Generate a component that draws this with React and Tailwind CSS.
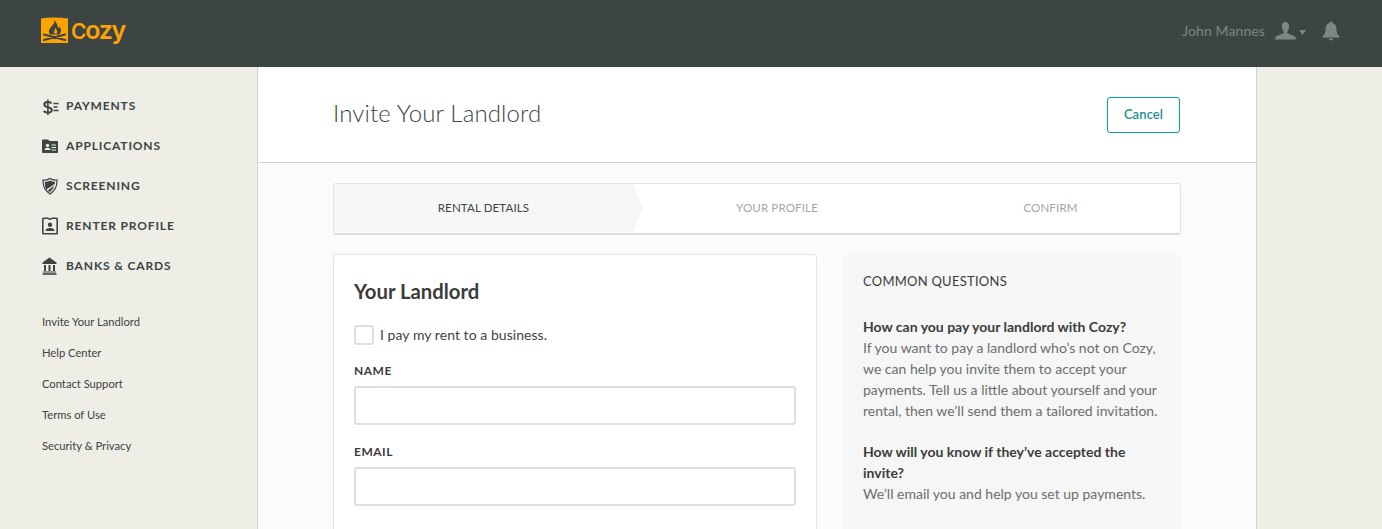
const FONT = "font-['Lato','Open_Sans',sans-serif]";

function CozyLogo() {
  return (
    <div className="flex items-center gap-[3px]">
      <svg width="27" height="27" viewBox="0 0 27 27">
        <path d="M0 1.5 Q13 -0.5 27 1.5 V26 H0 Z" fill="#ffa300" />
        <path d="M13 3 C14.5 6 11 8.5 9 11.5 C7.5 13.5 7.5 15.5 9 17.5 L18.5 17.5 C20.5 15 20.5 12.5 18.5 9.5 L17 11.5 C17 8.5 15.5 5 13 3 Z" fill="#3c4543" />
        <path d="M13.5 10.5 C15 12.5 12.5 14 13 16.5 L16 16.5 C16.8 14.5 15.5 12 13.5 10.5 Z" fill="#ffa300" />
        <path d="M3 17.5 L24 23 M24 17.5 L3 23" stroke="#3c4543" strokeWidth="2.2" strokeLinecap="round" />
      </svg>
      <span className="font-['Inter',sans-serif] text-[25px] leading-none font-semibold tracking-[-1.3px] text-[#ffa300]">
        <span className="text-[21px]">C</span>ozy
      </span>
    </div>
  );
}

function PaymentsIcon() {
  return (
    <svg width="18" height="18" viewBox="0 0 18 18" fill="none" stroke="#3c4543">
      <path d="M9.5 6.5 C8.5 4.5 2.3 4 2.3 7.5 C2.3 11 9.8 9.5 9.8 13 C9.8 16.5 3 16 1.6 14" strokeWidth="2" />
      <path d="M5.9 2.5V18" strokeWidth="1.6" />
      <path d="M11.5 6.5H16.5 M11.5 10H15.5 M11.5 13.5H16.5" strokeWidth="1.5" />
    </svg>
  );
}

function ApplicationsIcon() {
  return (
    <svg width="18" height="18" viewBox="0 0 18 18">
      <path d="M0 3.5 Q0 2.5 1 2.5 H6 L7.5 4 H15 Q16 4 16 5 V15 Q16 16 15 16 H1 Q0 16 0 15 Z" fill="#3c4543" />
      <circle cx="5.5" cy="8.5" r="1.7" fill="#eeede6" />
      <path d="M2.5 13 Q2.5 10.8 5.5 10.8 Q8.5 10.8 8.5 13 Z" fill="#eeede6" />
      <path d="M9.5 8H14 M9.5 10.5H14 M9.5 13H14" stroke="#eeede6" strokeWidth="1" />
    </svg>
  );
}

function ScreeningIcon() {
  return (
    <svg width="18" height="18" viewBox="0 0 18 18">
      <path d="M8 1.5 Q11 3.5 15 3 Q15.5 12 8 17 Q0.5 12 1 3 Q5 3.5 8 1.5 Z" fill="none" stroke="#3c4543" strokeWidth="1.2" />
      <path d="M8 3.5 Q10.5 5 13 4.8 Q13 6 12.7 7 L4.2 12.8 Q2.6 9.5 2.8 4.8 Q5.5 5 8 3.5 Z" fill="#3c4543" />
      <path d="M12.2 8.6 Q11 12.5 8 15 Q6.5 14 5.3 13.9 Z" fill="#3c4543" />
    </svg>
  );
}

function ProfileIcon() {
  return (
    <svg width="18" height="18" viewBox="0 0 18 18">
      <path d="M1.5 1.2 H5.5 Q8 3 10.5 1.2 H14.5 Q15.2 1.2 15.2 2 V16 Q15.2 16.8 14.5 16.8 H1.5 Q0.8 16.8 0.8 16 V2 Q0.8 1.2 1.5 1.2 Z" fill="none" stroke="#3c4543" strokeWidth="1.6" />
      <circle cx="8" cy="7.8" r="2.2" fill="#3c4543" />
      <path d="M3.5 14 Q3.5 11 8 11 Q12.5 11 12.5 14 Z" fill="#3c4543" />
    </svg>
  );
}

function BankIcon() {
  return (
    <svg width="18" height="18" viewBox="0 0 18 18">
      <path d="M7.5 0.5 L14.5 5.5 V7 H0.5 V5.5 Z" fill="#3c4543" />
      <path d="M3 8V14 M7.5 8V14 M12 8V14" stroke="#3c4543" strokeWidth="2" />
      <path d="M1 15H14" stroke="#3c4543" strokeWidth="1" />
      <path d="M0.5 17H14.5" stroke="#3c4543" strokeWidth="1.6" />
    </svg>
  );
}

const NAV = [
  { label: "PAYMENTS", icon: PaymentsIcon },
  { label: "APPLICATIONS", icon: ApplicationsIcon },
  { label: "SCREENING", icon: ScreeningIcon },
  { label: "RENTER PROFILE", icon: ProfileIcon },
  { label: "BANKS & CARDS", icon: BankIcon },
];

const LINKS = ["Invite Your Landlord", "Help Center", "Contact Support", "Terms of Use", "Security & Privacy"];

function Sidebar() {
  return (
    <aside className="w-[258px] shrink-0 border-r border-[#d5d5d0] pl-[42px] pt-[19px]">
      <nav className="flex flex-col">
        {NAV.map(({ label, icon: Icon }) => (
          <a key={label} className="flex h-[40px] items-center gap-[6px]">
            <Icon />
            <span className="text-[12px] font-bold tracking-[0.85px] text-[#3c4543]">{label}</span>
          </a>
        ))}
      </nav>
      <ul className="mt-[21px] flex flex-col">
        {LINKS.map((l) => (
          <li key={l} className="flex h-[31px] items-center text-[11.2px] text-[#3c4543]">{l}</li>
        ))}
      </ul>
    </aside>
  );
}

function Steps() {
  return (
    <div className="relative flex h-[52px] overflow-hidden rounded-[3px] border border-[#e4e4e4] border-b-2 border-b-[#dcdcdc] bg-white pb-[1px] text-[11.5px] tracking-[0.15px]">
      <div className="relative flex w-[299px] items-center justify-center bg-[#f6f6f6] text-[#3c4543]">
        RENTAL DETAILS
        <div className="absolute -right-[10px] top-0 h-full w-[10px] bg-[#f6f6f6] [clip-path:polygon(0_0,100%_50%,0_100%)]" />
      </div>
      <div className="flex w-[288px] items-center justify-center text-[#a5a5a5]">YOUR PROFILE</div>
      <div className="flex flex-1 items-center justify-center text-[#a5a5a5]">CONFIRM</div>
    </div>
  );
}

function Field({ label }) {
  return (
    <div>
      <label className="block text-[12px] font-bold tracking-[0.5px] text-[#3c3c3c] leading-[15px]">{label}</label>
      <input className="mt-[8px] block h-[39px] w-full rounded-[3px] border-2 border-[#dedede] bg-white" />
    </div>
  );
}

function FormCard() {
  return (
    <section className="w-[484px] shrink-0 rounded-t-[3px] border border-[#e4e4e4] bg-white px-[20px] pt-[24px] pb-[40px]">
      <h2 className="text-[20.3px] font-bold leading-[24px] text-[#3c3c3c]">Your Landlord</h2>
      <div className="mt-[21px] flex items-center gap-[6px]">
        <span className="h-[20px] w-[20px] rounded-[3px] border-2 border-[#dedede] bg-white" />
        <span className="text-[14px] tracking-[0.05px] text-[#3c4543]">I pay my rent to a business.</span>
      </div>
      <div className="mt-[18px] flex flex-col gap-[19px]">
        <Field label="NAME" />
        <Field label="EMAIL" />
      </div>
    </section>
  );
}

function Questions() {
  return (
    <section className="flex-1 rounded-t-[3px] bg-[#f6f6f6] px-[20px] pt-[18px] pb-[30px] text-[14px] leading-[21px] text-[#6a6f6d]">
      <h3 className="text-[13px] tracking-[0.25px] leading-[18px] text-[#3c3c3c]">COMMON QUESTIONS</h3>
      <p className="mt-[26px] font-bold text-[#3c3c3c]">How can you pay your landlord with Cozy?</p>
      <p>If you want to pay a landlord who’s not on Cozy, we can help you invite them to accept your payments. Tell us a little about yourself and your rental, then we’ll send them a tailored invitation.</p>
      <p className="mt-[20px] font-bold text-[#3c3c3c]">How will you know if they’ve accepted the invite?</p>
      <p>We’ll email you and help you set up payments.</p>
    </section>
  );
}

export default function App() {
  return (
    <div className={`flex h-[529px] flex-col overflow-hidden bg-[#eeede6] ${FONT}`}>
      <header className="flex h-[67px] shrink-0 items-center justify-between bg-[#3c4543] pb-[6px] pl-[41px] pr-[42px]">
        <CozyLogo />
        <div className="flex items-center text-[#7c8784]">
          <span className="text-[14px] tracking-[0.1px]">John Mannes</span>
          <svg className="ml-[10px]" width="22" height="20" viewBox="0 0 22 20" fill="currentColor">
            <path d="M10.5 1 C13.5 1 14.5 3.5 14 6.5 C13.7 8.5 12.8 10 12 11 C12 12.5 14 13 17 14 C20 15 21 16 21 18.5 H0 C0 16 1 15 4 14 C7 13 9 12.5 9 11 C8.2 10 7.3 8.5 7 6.5 C6.5 3.5 7.5 1 10.5 1 Z" />
          </svg>
          <svg className="ml-[2px] mt-[3px]" width="7" height="5" viewBox="0 0 7 5" fill="currentColor">
            <path d="M0 0H7L3.5 5Z" />
          </svg>
          <svg className="ml-[16px]" width="18" height="20" viewBox="0 0 18 20" fill="currentColor">
            <path d="M9 0.5 C10 0.5 10.5 1.2 10.5 2 C13.5 3 14.5 5.5 14.5 8.5 C14.5 12 15.5 13.5 17.5 15.5 V16.5 H0.5 V15.5 C2.5 13.5 3.5 12 3.5 8.5 C3.5 5.5 4.5 3 7.5 2 C7.5 1.2 8 0.5 9 0.5 Z M6.8 17.5 H11.2 C11 18.8 10 19.5 9 19.5 C8 19.5 7 18.8 6.8 17.5 Z" />
          </svg>
        </div>
      </header>

      <div className="flex min-h-0 flex-1">
        <Sidebar />
        <main className="w-[999px] shrink-0 border-r border-[#d5d5d0] bg-[#fbfbfb]">
          <div className="flex h-[96px] items-center justify-between border-b border-[#d2d2d2] bg-white pl-[75px] pr-[76px]">
            <h1 className="text-[24px] font-light tracking-[0.15px] text-[#3c4543] -mt-[3px]">Invite Your Landlord</h1>
            <button className="mt-[1px] h-[36px] w-[73px] rounded-[3px] border border-[#00a29a] bg-white text-[13px] font-semibold tracking-[0.1px] text-[#1d8f8c]">Cancel</button>
          </div>
          <div className="pl-[75px] pr-[75px] pt-[20px]">
            <Steps />
            <div className="mt-[19px] flex gap-[26px]">
              <FormCard />
              <Questions />
            </div>
          </div>
        </main>
      </div>
    </div>
  );
}
